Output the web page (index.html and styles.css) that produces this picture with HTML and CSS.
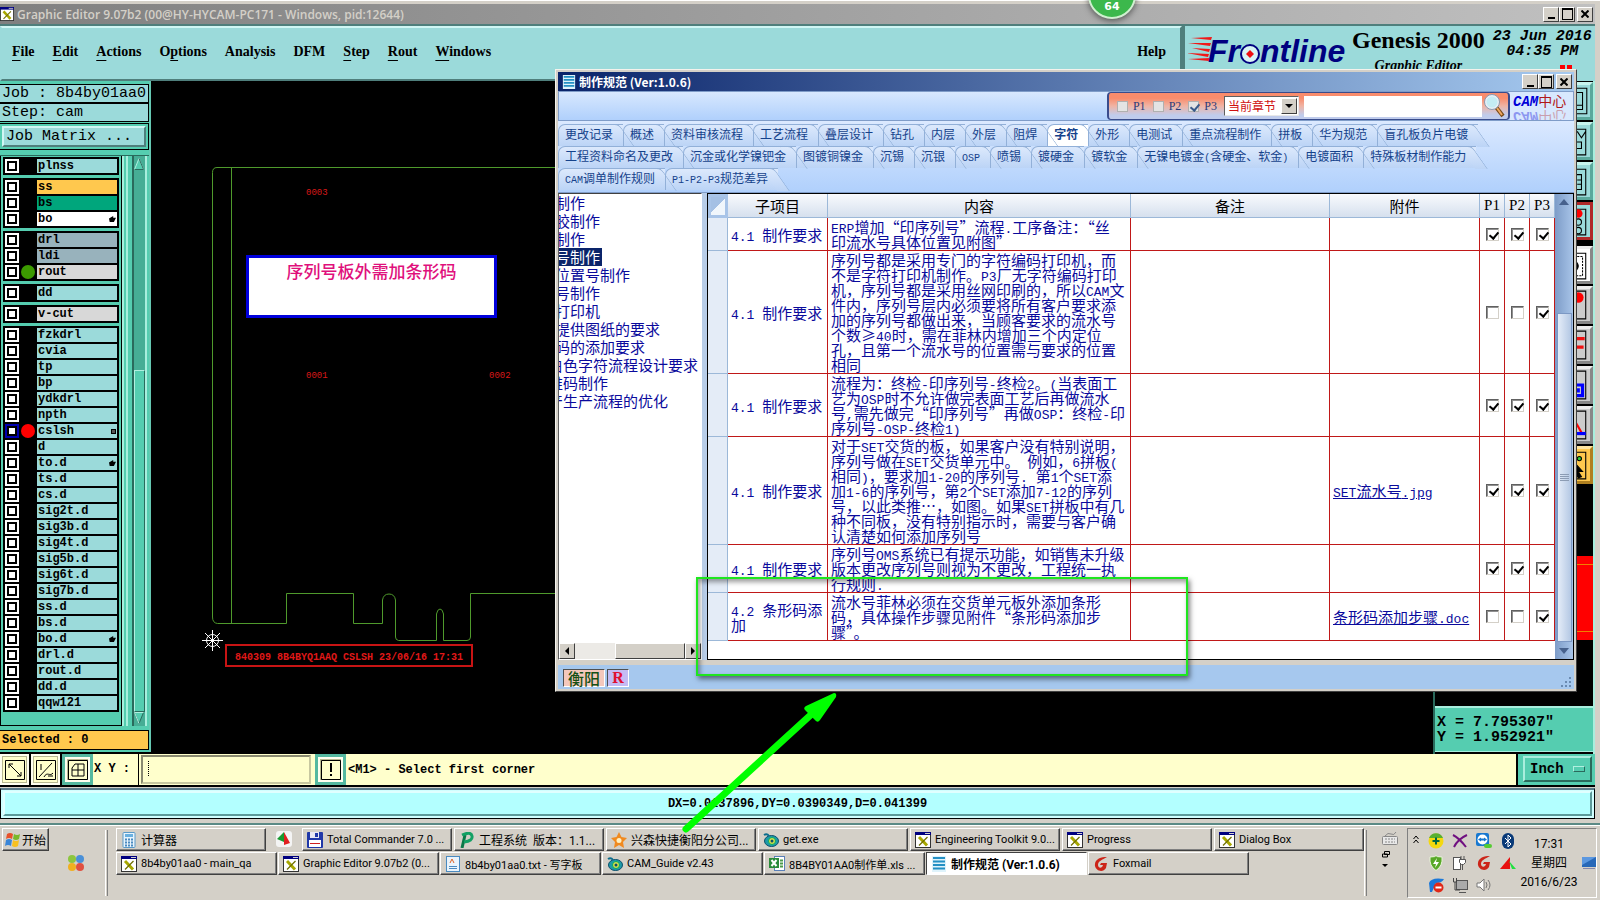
FILE: index.html
```
<!DOCTYPE html>
<html lang="zh-CN">
<head>
    <meta charset="UTF-8">
    <meta name="viewport" content="width=device-width, initial-scale=1.0">
    <title>Graphic Editor 9.07b2</title>
    <link rel="stylesheet" href="styles.css">
</head>
<body>
    <!-- shared icons -->
    <svg class="sprite" aria-hidden="true">
        <symbol id="i-xwin" viewBox="0 0 16 16">
            <rect x="0.5" y="0.5" width="15" height="15" fill="#fff" stroke="#333"/>
            <rect x="0" y="0" width="16" height="3" fill="#000080"/>
            <rect x="10" y="1" width="5" height="1" fill="#ccc"/>
            <path d="M4 5L12 13.5" stroke="#a8a800" stroke-width="3"/>
            <path d="M12.500 5L4 13.500" stroke="#707000" stroke-width="1.200"/>
        </symbol>
        <symbol id="i-doc" viewBox="0 0 16 16">
            <rect x="1" y="0" width="14" height="16" fill="#dff3fb"/>
            <path d="M2 2h12M2 5.500h12M2 9h12M2 12.500h12" stroke="#2590c4" stroke-width="2"/>
        </symbol>
        <symbol id="i-gecko" viewBox="0 0 16 16">
            <ellipse cx="8.500" cy="9" rx="7" ry="5.500" fill="#1e9aa8" stroke="#0b4f6c"/>
            <path d="M1 3q3-2 5 1" fill="none" stroke="#0b6c8c" stroke-width="2"/>
            <circle cx="9" cy="9" r="3.500" fill="#d8e04a" stroke="#0a6"/>
            <circle cx="9" cy="9" r="1.500" fill="#0b4f6c"/>
        </symbol>
        <symbol id="i-fox" viewBox="0 0 16 16">
            <path d="M14 1C8 1 1 3 2 10c1 5 8 7 11 2l1-5H8l-1 2h3c-1 4-5 3-5 0 0-4 4-5 9-8z" fill="#cc2418"/>
        </symbol>
    </svg>

    <div class="editor">
        <div class="titlebar">
            <svg class="ico"><use href="#i-xwin"/></svg>
            <span class="title">Graphic Editor 9.07b2 (00@HY-HYCAM-PC171 - Windows, pid:12644)</span>
            <div class="winbtns">
                <button class="wb min" aria-label="Minimize"></button>
                <button class="wb max" aria-label="Maximize"></button>
                <button class="wb close" aria-label="Close"><svg viewBox="0 0 8 8"><path d="M0.500 0.500L7.500 7.500M7.500 0.500L0.500 7.500"/></svg></button>
            </div>
        </div>

        <div class="top">
            <nav class="menubar">
                <a href="#"><u>F</u>ile</a>
                <a href="#"><u>E</u>dit</a>
                <a href="#"><u>A</u>ctions</a>
                <a href="#">O<u>p</u>tions</a>
                <a href="#">Analysis</a>
                <a href="#">DFM</a>
                <a href="#"><u>S</u>tep</a>
                <a href="#"><u>R</u>out</a>
                <a href="#"><u>W</u>indows</a>
                <a href="#" class="help">Help</a>
            </nav>
            <div class="brand">
                <svg class="logo" width="160" height="34" viewBox="2 0 160 34">
                    <g fill="#f01818">
                        <path d="M5 5L26 4l-1 3zM2 10l23 0-1 3zM6 15l18 1-1 3zM1 20l22 1-1 3zM2 26l22-1-1 3z"/>
                    </g>
                    <text x="22" y="29" class="logo-text">Fr</text>
                    <circle cx="64" cy="21" r="9" fill="#d8f4f4" stroke="#000080" stroke-width="2"/>
                    <path d="M64 17l4 4-4 4-4-4z" fill="#f01010"/>
                    <text x="74" y="29" class="logo-text">ntline</text>
                </svg>
                <div class="product">
                    <div class="name">Genesis 2000</div>
                    <div class="sub">Graphic Editor</div>
                </div>
                <div class="date">23 Jun 2016<br>04:35 PM<div class="led"><i></i><i></i></div></div>
            </div>
        </div>

        <div class="main">
            <aside class="layers">
                <div class="info">Job : 8b4by01aa0</div>
                <div class="info">Step: cam</div>
                <div class="matrix"><button>Job Matrix ...</button></div>
                <div class="listwrap">
                    <div class="list">
                        <div class="group">
                            <label><input type="checkbox"><i></i><span>plnss</span></label>
                        </div>
                        <div class="group">
                            <label><input type="checkbox"><i></i><span class="orange">ss</span></label>
                            <label><input type="checkbox"><i></i><span class="green">bs</span></label>
                            <label><input type="checkbox"><i></i><span class="white">bo<b class="hand"></b></span></label>
                        </div>
                        <div class="group">
                            <label><input type="checkbox"><i></i><span class="steel">drl</span></label>
                            <label><input type="checkbox"><i></i><span class="steel">ldi</span></label>
                            <label><input type="checkbox"><i class="dot-green"></i><span class="grey">rout</span></label>
                        </div>
                        <div class="group">
                            <label><input type="checkbox"><i></i><span>dd</span></label>
                        </div>
                        <div class="group">
                            <label><input type="checkbox"><i></i><span class="grey">v-cut</span></label>
                        </div>
                        <div class="group">
                            <label><input type="checkbox"><i></i><span>fzkdrl</span></label>
                            <label><input type="checkbox"><i></i><span>cvia</span></label>
                            <label><input type="checkbox"><i></i><span>tp</span></label>
                            <label><input type="checkbox"><i></i><span>bp</span></label>
                            <label><input type="checkbox"><i></i><span>ydkdrl</span></label>
                            <label><input type="checkbox"><i></i><span>npth</span></label>
                            <label><input type="checkbox" checked><i class="dot-red"></i><span>cslsh<b class="cells"></b></span></label>
                            <label><input type="checkbox"><i></i><span>d</span></label>
                            <label><input type="checkbox"><i></i><span>to.d<b class="hand"></b></span></label>
                            <label><input type="checkbox"><i></i><span>ts.d</span></label>
                            <label><input type="checkbox"><i></i><span>cs.d</span></label>
                            <label><input type="checkbox"><i></i><span>sig2t.d</span></label>
                            <label><input type="checkbox"><i></i><span>sig3b.d</span></label>
                            <label><input type="checkbox"><i></i><span>sig4t.d</span></label>
                            <label><input type="checkbox"><i></i><span>sig5b.d</span></label>
                            <label><input type="checkbox"><i></i><span>sig6t.d</span></label>
                            <label><input type="checkbox"><i></i><span>sig7b.d</span></label>
                            <label><input type="checkbox"><i></i><span>ss.d</span></label>
                            <label><input type="checkbox"><i></i><span>bs.d</span></label>
                            <label><input type="checkbox"><i></i><span>bo.d<b class="hand"></b></span></label>
                            <label><input type="checkbox"><i></i><span>drl.d</span></label>
                            <label><input type="checkbox"><i></i><span>rout.d</span></label>
                            <label><input type="checkbox"><i></i><span>dd.d</span></label>
                            <label><input type="checkbox"><i></i><span>qqw121</span></label>
                        </div>
                    </div>
                    <div class="rail">
                        <svg viewBox="0 0 10 12"><path d="M5 0.500L9.500 11.500H0.500z" fill="#55cdb0" stroke="#b0f0e0"/><path d="M5 0.500L9.500 11.500H0.500" fill="none" stroke="#2a6a5c"/></svg>
                        <div class="thumb"></div>
                        <svg viewBox="0 0 10 12"><path d="M0.500 0.500H9.500L5 11.500z" fill="#55cdb0" stroke="#2a6a5c"/><path d="M5 11.500L0.500 0.500H9.500" fill="none" stroke="#b0f0e0"/></svg>
                    </div>
                </div>
                <div class="selected">Selected : 0</div>
            </aside>

            <div class="canvas">
                <svg class="board" width="100%" height="100%">
                    <g fill="none" stroke="#4f9a2c">
                        <path d="M420 86.500H66q-4.500 0-4.500 5V536q0 6 5 6.500H135.500V512.500H202.500V542.500H231.500V519q1-6 6.500-6t6.500 6V556q0 3 3 3.500H285.500V533q1-5 3.500-5t3.500 5V559.500H316q3.500 0 3.500-3.500V512.500H420"/>
                        <path d="M80.500 86.500V542"/>
                    </g>
                    <g stroke="#fff" fill="none">
                        <circle cx="61.500" cy="559.500" r="6"/>
                        <path d="M51 559.500h21M61.500 549v21M54 552l15 15M69 552l-15 15"/>
                    </g>
                    <g class="ref">
                        <text x="155" y="114">0003</text>
                        <text x="155" y="297">0001</text>
                        <text x="338" y="297">0002</text>
                    </g>
                    <rect x="75" y="564" width="246" height="21" fill="none" stroke="#c81414" stroke-width="2"/>
                    <text x="198" y="579" text-anchor="middle" class="stamp">840309 8B4BYQ1AAQ CSLSH 23/06/16 17:31</text>
                </svg>
                <div class="note">序列号板外需加条形码</div>
            </div>

            <aside class="side">
                <div class="tools">
                    <button class="tool" aria-label="Display"><svg viewBox="0 0 30 30"><path d="M3 3h24v24H3zM8 7h15v16H8M8 19h15"/></svg></button>
                    <button class="tool" aria-label="Zoom"><svg viewBox="0 0 30 30"><path d="M4 4h22v24H4zM18 6l4 6 4-6M14 16h8v6h-8"/></svg></button>
                    <button class="tool" aria-label="Pan"><svg viewBox="0 0 30 30"><path d="M4 4h22v24H4zM14 9h8v14h-8M18 14h4v4h-4"/></svg></button>
                    <button class="tool red" aria-label="Lights"><svg viewBox="0 0 30 30"><path d="M4 4h22v24H4z"/><circle cx="19" cy="8" r="4" fill="#f00" stroke="none"/><circle cx="19" cy="16" r="3"/><circle cx="19" cy="24" r="3"/></svg></button>
                    <button class="tool white" aria-label="Select"><svg viewBox="0 0 30 30"><path d="M4 4h22v24H4z"/><path d="M12 7h11v18H12" stroke-dasharray="2 1"/><circle cx="14" cy="16" r="5" fill="#000"/></svg></button>
                    <button class="tool silver" aria-label="Pad"><svg viewBox="0 0 30 30"><path d="M4 2h22v26H4z"/><circle cx="19" cy="8" r="5" fill="#f00" stroke="none"/></svg></button>
                    <button class="tool silver" aria-label="Feature"><svg viewBox="0 0 30 30"><path d="M4 2h22v26H4z"/><path d="M16 26V9h9M16 17h8" stroke="#f01010" stroke-width="3"/></svg></button>
                    <button class="tool silver" aria-label="Surface"><svg viewBox="0 0 30 30"><path d="M4 2h22v26H4z"/><path d="M12 15h11v10H12zM19 18v4" stroke="#00f" stroke-width="3"/></svg></button>
                    <button class="tool silver" aria-label="Angle"><svg viewBox="0 0 30 30"><path d="M4 2h22v26H4z"/><path d="M14 8l8 14" stroke="#f00" stroke-width="2"/><path d="M12 23h14" stroke="#00f" stroke-width="3"/></svg></button>
                    <button class="tool gold" aria-label="Pointer"><svg viewBox="0 0 30 30"><path d="M4 3h22v25H4zM12 9h6"/><circle cx="20" cy="9" r="2" fill="#3c3"/><path d="M14 11l9 10-4 0 3 5-3 1-3-5-3 3z" fill="#000"/></svg></button>
                </div>
                <div class="overview"><i></i></div>
                <div class="coords">X = 7.795307"<br>Y = 1.952921"</div>
            </aside>
        </div>

        <div class="command">
            <button class="cbtn" aria-label="Snap"><svg viewBox="0 0 20 20"><path d="M0.500 0.500h19v19h-19zM4 4l12 12M4 8V4h4M16 12v4h-4"/></svg></button>
            <button class="cbtn" aria-label="Ratio"><svg viewBox="0 0 20 20"><path d="M0.500 0.500h19v19h-19zM3 17L16 3M5 4v6M8 17c3-6 6 0 9-4M12 16h5"/></svg></button>
            <button class="cbtn teal" aria-label="Grid"><svg viewBox="0 0 20 20"><path d="M0.500 0.500h19v19h-19zM4 8l3-4h9v12H4zM4 10h12M10 4v12"/></svg></button>
            <label for="xy">X Y :</label>
            <input id="xy" type="text">
            <button class="cbtn teal" aria-label="Message"><svg viewBox="0 0 20 20"><path d="M0.500 0.500h19v19h-19z"/><path d="M10 3v9M10 14v2" stroke-width="2"/></svg></button>
            <span class="message">&lt;M1&gt; - Select first corner</span>
            <div class="unitbox"><button class="unit">Inch<i></i></button></div>
        </div>
        <div class="status"><div>DX=0.0137896,DY=0.0390349,D=0.041399</div></div>
    </div>

    <div class="taskbar">
        <button class="start"><svg class="ico" viewBox="0 0 16 16"><path d="M2 2q3-2 6 0l-1 5q-3-2-6 0z" fill="#e8512a"/><path d="M9 2q3 2 6 0l-1 5q-3 2-6 0z" fill="#7ab82a"/><path d="M1 8q3-2 6 0l-1 6q-3-2-6 0z" fill="#3a86d8"/><path d="M8 8q3 2 6 0l-1 6q-3 2-6 0z" fill="#f8c020"/></svg>开始</button>
        <svg class="quick" width="18" height="18" viewBox="0 0 18 18"><circle cx="5" cy="5" r="4" fill="#8cc63f"/><circle cx="13" cy="5" r="4" fill="#4a90d8"/><circle cx="5" cy="13" r="4" fill="#f0b020"/><circle cx="13" cy="13" r="4" fill="#e05040"/></svg>
        <div class="sep"></div>
        <div class="tasks">
            <div class="row">
                <button class="task zh"><svg class="ico" viewBox="0 0 16 16"><rect x="2" y="0.500" width="12" height="15" rx="1" fill="#e8f4fc" stroke="#5a9ac8"/><rect x="4" y="2" width="8" height="3" fill="#6ab0e0"/><path d="M4 7.500h8M4 10.500h8M4 13.500h8" stroke="#4a8ac0" stroke-width="2" stroke-dasharray="2 1"/></svg>计算器</button>
                <svg class="tiny" width="16" height="16" viewBox="0 0 16 16"><rect width="16" height="16" rx="3" fill="#f4f4f4"/><path d="M8 1L1 8l7 3z" fill="#189a30"/><path d="M8 1l6 11-6 2z" fill="#e02020"/></svg>
                <button class="task"><svg class="ico" viewBox="0 0 16 16"><rect width="16" height="16" rx="1" fill="#2038a8"/><rect x="3" y="0" width="9" height="6" fill="#e8e8f4"/><rect x="8" y="1" width="3" height="4" fill="#2038a8"/><rect x="2" y="8" width="12" height="7" fill="#fff"/><path d="M3 11.500h10" stroke="#d02020"/></svg>Total Commander 7.0 ...</button>
                <button class="task zh"><svg class="ico" viewBox="0 0 16 16"><path d="M3 16L6 3" stroke="#0a7848" stroke-width="3"/><path d="M3 3q9-4 10 1t-8 6" fill="none" stroke="#12a064" stroke-width="3"/></svg>工程系统&nbsp; 版本：1.1...</button>
                <button class="task zh"><svg class="ico" viewBox="0 0 16 16"><path d="M8 0l2.500 5 5.500 1-4 4 1 6-5-3-5 3 1-6-4-4 5.500-1z" fill="#f08a20"/><circle cx="8" cy="8.500" r="2.500" fill="#fff0c0"/></svg>兴森快捷衡阳分公司...</button>
                <button class="task"><svg class="ico"><use href="#i-gecko"/></svg>get.exe</button>
                <button class="task"><svg class="ico"><use href="#i-xwin"/></svg>Engineering Toolkit 9.0...</button>
                <button class="task"><svg class="ico"><use href="#i-xwin"/></svg>Progress</button>
                <button class="task"><svg class="ico"><use href="#i-xwin"/></svg>Dialog Box</button>
            </div>
            <div class="row wide">
                <button class="task"><svg class="ico"><use href="#i-xwin"/></svg>8b4by01aa0 - main_qa</button>
                <button class="task"><svg class="ico"><use href="#i-xwin"/></svg>Graphic Editor 9.07b2 (0...</button>
                <button class="task"><svg class="ico" viewBox="0 0 16 16"><rect x="1.500" y="0.500" width="13" height="15" fill="#eaf4fc" stroke="#4a8ac0"/><path d="M5 7l2-4 2 4" fill="none" stroke="#e06020"/><path d="M4 10.500h8M4 12.500h8" stroke="#4a8ac0"/></svg>8b4by01aa0.txt - 写字板</button>
                <button class="task"><svg class="ico"><use href="#i-gecko"/></svg>CAM_Guide v2.43</button>
                <button class="task"><svg class="ico" viewBox="0 0 16 16"><rect x="5.500" y="0.500" width="10" height="14" fill="#fff" stroke="#5a80b8"/><path d="M11 4.500h3M11 7.500h3M11 10.500h3" stroke="#4a9a4a" stroke-width="2"/><rect x="0" y="2" width="10" height="10" fill="#2a8a3a"/><path d="M2.500 4l5 6M7.500 4l-5 6" stroke="#fff" stroke-width="2"/></svg>8B4BY01AA0制作单.xls ...</button>
                <button class="task active"><svg class="ico"><use href="#i-doc"/></svg>制作规范 (Ver:1.0.6)</button>
                <button class="task"><svg class="ico"><use href="#i-fox"/></svg>Foxmail</button>
            </div>
        </div>
        <div class="sep"></div>
        <div class="lang">
            <svg width="16" height="14" viewBox="0 0 16 14"><rect x="0.500" y="5.500" width="15" height="8" rx="1" fill="#e8e8e8" stroke="#888"/><path d="M3 8h10M3 11h10" stroke="#888" stroke-dasharray="2 1"/><path d="M3 5q3-4 6-2t5-2" fill="none" stroke="#888"/></svg>
            <svg width="8" height="7" viewBox="0 0 8 7"><path d="M2.500 0.500h5v3h-5zM0.500 3h5v3h-5z" fill="#d4d0c8" stroke="#000"/></svg>
            <svg width="6" height="3" viewBox="0 0 6 3"><path d="M0 0h6L3 3z"/></svg>
        </div>
        <div class="tray">
            <svg class="chev" width="6" height="9" viewBox="0 0 6 9"><path d="M0.500 4L3 1l2.500 3M0.500 8L3 5l2.500 3" fill="none" stroke="#000"/></svg>
            <div class="trayicons">
                <svg viewBox="0 0 16 16"><circle cx="8" cy="8" r="7.500" fill="#f4d810"/><path d="M1 5a7.500 7.500 0 0 1 14 0" fill="#58b030"/><path d="M8 4.500v7M4.500 8h7" stroke="#064" stroke-width="2"/></svg>
                <svg viewBox="0 0 16 16"><path d="M1 2q6 3 13 12M15 2Q6 6 2 14" fill="none" stroke="#701080" stroke-width="2"/></svg>
                <svg viewBox="0 0 16 16"><rect x="0" y="0" width="13" height="13" rx="2" fill="#1878d0"/><circle cx="6.500" cy="6.500" r="5" fill="#fff"/><path d="M2 6.500l3-2v1h3v-1l3 2-3 2v-1H5v1z" fill="#1878d0"/><rect x="8" y="11" width="8" height="4" rx="2" fill="#5c3"/></svg>
                <svg viewBox="0 0 16 16"><rect x="2" y="0" width="12" height="16" rx="6" fill="#0a3a78"/><path d="M5 5l6 6-3 3V2l3 3-6 6" fill="none" stroke="#fff"/></svg>
                <svg viewBox="0 0 16 16"><path d="M2 2q6 0 6-1.500 0 1.500 6 1.500 1 9-6 13.500Q1 11 2 2z" fill="#58a828" stroke="#e8f4d8"/><path d="M9 3L5 9h3l-1 4 4-6H8z" fill="#fff"/></svg>
                <svg viewBox="0 0 16 16"><rect x="1.500" y="2.500" width="7" height="12" fill="#fff" stroke="#555"/><path d="M9 1v3M12 1v3M7.500 4.500h6v3l-2 2h-2l-2-2zM10.500 10v5" fill="#fff" stroke="#555"/></svg>
                <svg><use href="#i-fox"/></svg>
                <svg viewBox="0 0 16 16"><path d="M0 14L10 2v12z" fill="#e81010"/><path d="M9 6l7 8h-4z" fill="#20e040"/></svg>
                <svg viewBox="0 0 16 16"><path d="M1 6q2-6 15-4-2 4-8 4l-4 9H2z" fill="#1c78d8"/><circle cx="10.500" cy="10.500" r="5" fill="#e02818"/><path d="M7.500 10.500h6" stroke="#fff" stroke-width="2"/></svg>
                <svg viewBox="0 0 16 16"><rect x="4.500" y="3.500" width="11" height="9" fill="#aaa" stroke="#555"/><path d="M7 15.500h7" stroke="#555"/><path d="M1.500 1v4h3V1M3 5v8h5" fill="none" stroke="#444"/></svg>
                <svg viewBox="0 0 16 16"><path d="M1 6h3l4-4v12l-4-4H1z" fill="#fff" stroke="#777"/><path d="M10 5q2 3 0 6M12 3q4 5 0 10" fill="none" stroke="#777"/></svg>
            </div>
            <div class="clock">17:31<br>星期四<br>2016/6/23</div>
            <svg class="desk" width="14" height="12" viewBox="0 0 14 12"><rect width="14" height="10" fill="#2868b8"/><path d="M0 0h14L0 8z" fill="#5c98e0"/><path d="M1 11.500h12" stroke="#88a"/></svg>
        </div>
    </div>

    <div class="dialog">
        <div class="dlg-title">
            <svg class="ico"><use href="#i-doc"/></svg>
            <span>制作规范 (Ver:1.0.6)</span>
            <div class="winbtns">
                <button class="wb min" aria-label="最小化"></button>
                <button class="wb max" aria-label="最大化"></button>
                <button class="wb close" aria-label="关闭"><svg viewBox="0 0 8 8"><path d="M0.500 0.500L7.500 7.500M7.500 0.500L0.500 7.500"/></svg></button>
            </div>
        </div>
        <div class="dlg-tools">
            <div class="search">
                <label><input type="checkbox" class="soft">P1</label>
                <label><input type="checkbox" class="soft">P2</label>
                <label><input type="checkbox" class="soft" checked>P3</label>
                <div class="combo">
                    <select aria-label="范围"><option>当前章节</option></select>
                    <i></i>
                </div>
                <input type="text" class="query" aria-label="搜索">
                <svg width="22" height="24" viewBox="0 0 22 24"><path d="M12 13l7 9" stroke="#7a4a18" stroke-width="4"/><path d="M13 14l5 7" stroke="#f0a860" stroke-width="2"/><circle cx="8" cy="8" r="6.500" fill="#c4ecf4" stroke="#e8eef4" stroke-width="2"/><circle cx="8" cy="8" r="7.500" fill="none" stroke="#8a9ab0"/></svg>
            </div>
            <div class="cam"><div><em>CAM</em>中心</div><div class="mirror" aria-hidden="true"><em>CAM</em>中心</div></div>
        </div>
        <div class="tabs">
            <div class="tabrow">
                <button>更改记录</button><button>概述</button><button>资料审核流程</button><button>工艺流程</button><button>叠层设计</button><button>钻孔</button><button>内层</button><button>外层</button><button>阻焊</button><button class="on">字符</button><button>外形</button><button>电测试</button><button>重点流程制作</button><button>拼板</button><button>华为规范</button><button>盲孔板负片电镀</button>
            </div>
            <div class="tabrow">
                <button>工程资料命名及更改</button><button>沉金或化学镍钯金</button><button>图镀铜镍金</button><button>沉锡</button><button>沉银</button><button><span>OSP</span></button><button>喷锡</button><button>镀硬金</button><button>镀软金</button><button>无镍电镀金<span>(</span>含硬金、软金<span>)</span></button><button>电镀面积</button><button>特殊板材制作能力</button>
            </div>
            <div class="tabrow">
                <button><span>CAM</span>调单制作规则</button><button><span>P1-P2-P3</span>规范差异</button>
            </div>
        </div>
        <div class="content">
            <div class="tree">
                <ul>
                    <li>制作</li>
                    <li>胶制作</li>
                    <li>制作</li>
                    <li><span class="sel">号制作</span></li>
                    <li>位置号制作</li>
                    <li>号制作</li>
                    <li>打印机</li>
                    <li>提供图纸的要求</li>
                    <li>码的添加要求</li>
                    <li class="half">白色字符流程设计要求</li>
                    <li class="half">维码制作</li>
                    <li class="half">产生产流程的优化</li>
                </ul>
                <div class="hscroll">
                    <button aria-label="左"><svg width="4" height="8" viewBox="0 0 4 8"><path d="M4 0v8L0 4z"/></svg></button>
                    <div class="track"><i></i></div>
                    <button aria-label="右"><svg width="4" height="8" viewBox="0 0 4 8"><path d="M0 0v8l4-4z"/></svg></button>
                </div>
            </div>
            <div class="sheet">
                <div class="tablebox">
                    <table>
                        <colgroup><col class="c-head"><col class="c-item"><col class="c-text"><col><col class="c-file"><col class="c-p"><col class="c-p"><col class="c-p"></colgroup>
                        <thead>
                            <tr><th class="corner"></th><th>子项目</th><th>内容</th><th>备注</th><th>附件</th><th class="lat">P1</th><th class="lat">P2</th><th class="lat">P3</th></tr>
                        </thead>
                        <tbody>
                            <tr>
                                <th></th><td><span>4.1 </span>制作要求</td>
                                <td><span>ERP</span>增加“印序列号”流程<span>.</span>工序备注：“丝<br>印流水号具体位置见附图”</td>
                                <td></td><td></td>
                                <td class="chk"><input type="checkbox" aria-label="P1" checked></td><td class="chk"><input type="checkbox" aria-label="P2" checked></td><td class="chk"><input type="checkbox" aria-label="P3" checked></td>
                            </tr>
                            <tr>
                                <th></th><td><span>4.1 </span>制作要求</td>
                                <td>序列号都是采用专门的字符编码打印机，而<br>不是字符打印机制作。<span>P3</span>厂无字符编码打印<br>机，序列号都是采用丝网印刷的，所以<span>CAM</span>文<br>件内，序列号层内必须要将所有客户要求添<br>加的序列号都做出来，当顾客要求的流水号<br>个数≥<span>40</span>时，需在菲林内增加三个内定位<br>孔，且第一个流水号的位置需与要求的位置<br>相同</td>
                                <td></td><td></td>
                                <td class="chk"><input type="checkbox" aria-label="P1"></td><td class="chk"><input type="checkbox" aria-label="P2"></td><td class="chk"><input type="checkbox" aria-label="P3" checked></td>
                            </tr>
                            <tr>
                                <th></th><td><span>4.1 </span>制作要求</td>
                                <td>流程为：终检<span>-</span>印序列号<span>-</span>终检<span>2</span>。<span>(</span>当表面工<br>艺为<span>OSP</span>时不允许做完表面工艺后再做流水<br>号<span>,</span>需先做完“印序列号”再做<span>OSP</span>：终检<span>-</span>印<br>序列号<span>-OSP-</span>终检<span>1)</span></td>
                                <td></td><td></td>
                                <td class="chk"><input type="checkbox" aria-label="P1" checked></td><td class="chk"><input type="checkbox" aria-label="P2" checked></td><td class="chk"><input type="checkbox" aria-label="P3" checked></td>
                            </tr>
                            <tr>
                                <th></th><td><span>4.1 </span>制作要求</td>
                                <td>对于<span>SET</span>交货的板，如果客户没有特别说明，<br>序列号做在<span>SET</span>交货单元中。<span> </span>例如，<span>6</span>拼板<span>(</span><br>相同<span>)</span>，要求加<span>1-20</span>的序列号<span>. </span>第<span>1</span>个<span>SET</span>添<br>加<span>1-6</span>的序列号，第<span>2</span>个<span>SET</span>添加<span>7-12</span>的序列<br>号，以此类推…，如图。如果<span>SET</span>拼板中有几<br>种不同板，没有特别指示时，需要与客户确<br>认清楚如何添加序列号</td>
                                <td></td><td><a href="#"><span>SET</span>流水号<span>.jpg</span></a></td>
                                <td class="chk"><input type="checkbox" aria-label="P1" checked></td><td class="chk"><input type="checkbox" aria-label="P2" checked></td><td class="chk"><input type="checkbox" aria-label="P3" checked></td>
                            </tr>
                            <tr>
                                <th></th><td><span>4.1 </span>制作要求</td>
                                <td>序列号<span>OMS</span>系统已有提示功能，如销售未升级<br>版本更改序列号则视为不更改，工程统一执<br>行规则<span>.</span></td>
                                <td></td><td></td>
                                <td class="chk"><input type="checkbox" aria-label="P1" checked></td><td class="chk"><input type="checkbox" aria-label="P2" checked></td><td class="chk"><input type="checkbox" aria-label="P3" checked></td>
                            </tr>
                            <tr>
                                <th></th><td><span>4.2 </span>条形码添<br>加</td>
                                <td>流水号菲林必须在交货单元板外添加条形<br>码，具体操作步骤见附件“条形码添加步<br>骤”。</td>
                                <td></td><td><a href="#">条形码添加步骤<span>.doc</span></a></td>
                                <td class="chk"><input type="checkbox" aria-label="P1"></td><td class="chk"><input type="checkbox" aria-label="P2"></td><td class="chk"><input type="checkbox" aria-label="P3" checked></td>
                            </tr>
                        </tbody>
                    </table>
                </div>
                <div class="vscroll">
                    <svg width="10" height="6" viewBox="0 0 10 6"><path d="M5 0l5 6H0z" fill="#47618c"/></svg>
                    <div class="vthumb"><i></i></div>
                    <svg width="10" height="6" viewBox="0 0 10 6"><path d="M0 0h10L5 6z" fill="#47618c"/></svg>
                </div>
            </div>
        </div>
        <div class="dlg-status">
            <span class="site">衡阳</span><span class="mode">R</span>
            <svg width="12" height="12" viewBox="0 0 12 12"><path d="M9 1h2v2H9zM5 5h2v2H5zM9 5h2v2H9zM1 9h2v2H1zM5 9h2v2H5zM9 9h2v2H9z" fill="#6a8ab0"/></svg>
        </div>
    </div>

    <div class="badge">64</div>
    <div class="frame"></div>
    <svg class="arrow" width="160" height="145" viewBox="0 0 160 145"><path d="M9 137L138 19" stroke="#00ff00" stroke-width="7" stroke-linecap="round"/><path d="M157 1L129 14q-3 2-1 4l11 11q2 2 4-1L159 5q1-4-2-4z" fill="#00ff00"/></svg>
</body>
</html>
```
FILE: styles.css
```
* {
    box-sizing: border-box;
}
body {
    margin: 0;
    min-height: 100vh;
    display: flex;
    flex-direction: column;
    position: relative;
    overflow: hidden;
    background: #d4d0c8;
    font-family: "Noto Sans CJK SC", sans-serif;
    font-size: 12px;
    color: #000;
}
button, input, select {
    font: inherit;
    color: inherit;
    margin: 0;
    padding: 0;
}
button {
    border: 0;
    background: none;
}
svg {
    flex: none;
}
.sprite {
    position: absolute;
    width: 0;
    height: 0;
}
.ico {
    width: 16px;
    height: 16px;
}

/* editor window */
.editor {
    flex: 1;
    display: flex;
    flex-direction: column;
    padding: 3px 5px 4px 0;
    border-top: 1px solid #fff;
    border-bottom: 2px solid #5b8a85;
    background: #d4d0c8;
}
.titlebar {
    height: 20px;
    display: flex;
    align-items: center;
    gap: 3px;
    padding-right: 2px;
    background: linear-gradient(90deg, #808080, #c0c0c0);
}
.titlebar .ico {
    width: 14px;
    height: 14px;
}
.title {
    flex: 1;
    font: 600 12px "Open Sans", sans-serif;
    color: #d4d0c8;
}
.winbtns {
    display: flex;
}
.wb {
    width: 16px;
    height: 15px;
    display: flex;
    align-items: center;
    justify-content: center;
    background: #d4d0c8;
    border: 1px solid;
    border-color: #fff #404040 #404040 #fff;
}
.wb.min::before {
    content: "";
    width: 7px;
    height: 2px;
    margin-top: 8px;
    background: #000;
}
.wb.max::before {
    content: "";
    width: 9px;
    height: 9px;
    border: 1px solid #000;
    border-top-width: 2px;
}
.wb.close {
    margin-left: 2px;
}
.wb svg {
    width: 8px;
    height: 8px;
    stroke: #000;
    stroke-width: 2;
}
.top {
    height: 57px;
    display: flex;
    background: #9bdada;
    border-top: 2px solid #4f7f7c;
}
.menubar {
    flex: 1;
    display: flex;
    align-items: center;
    gap: 18px;
    padding: 0 14px 4px 10px;
    border: 2px solid;
    border-color: #d0f6f4 #4f7f7c #4f7f7c #9bdada;
}
.menubar a {
    font: bold 14px "Liberation Serif", serif;
    color: #000;
    text-decoration: none;
}
.menubar u {
    text-underline-offset: 4px;
}
.menubar .help {
    margin-left: auto;
}
.brand {
    width: 413px;
    display: flex;
    gap: 4px;
    padding-left: 3px;
    border-left: 3px solid #4f7f7c;
}
.logo {
    margin-top: 7px;
}
.logo-text {
    font: italic bold 32px "Liberation Sans", sans-serif;
    fill: #000080;
}
.product {
    text-align: center;
    font-family: "Liberation Serif", serif;
    font-weight: bold;
}
.product .name {
    font-size: 24px;
    line-height: 28px;
    white-space: nowrap;
}
.product .sub {
    font-size: 14px;
    line-height: 24px;
    font-style: italic;
}
.date {
    font: italic bold 15px/15px "Liberation Mono", monospace;
    padding: 3px 0 0 4px;
    text-align: center;
    white-space: nowrap;
}
.led {
    display: flex;
    justify-content: flex-end;
    gap: 2px;
    padding: 6px 20px 0 0;
}
.led i {
    width: 5px;
    height: 5px;
    background: #f00;
}

.main {
    flex: 1;
    display: flex;
    background: #000;
}
/* layer list */
.layers {
    width: 151px;
    display: flex;
    flex-direction: column;
    padding: 3px 0 2px 0;
    margin-bottom: 2px;
    background: #55cdb0;
    border-right: 2px solid #66c8b2;
}
.info {
    height: 19px;
    padding-left: 2px;
    border: 1px solid #000;
    border-left: 0;
    background: #9bdada;
    font: 15px/17px "Liberation Mono", monospace;
    white-space: nowrap;
}
.matrix {
    margin-top: 1px;
    padding: 2px;
    border: 1px solid #000;
    border-left: 0;
}
.matrix button {
    width: 100%;
    height: 21px;
    padding-left: 2px;
    text-align: left;
    background: #9bdada;
    border: 2px solid;
    border-color: #d0f6f4 #4f7f7c #4f7f7c #d0f6f4;
    font: 15px/17px "Liberation Mono", monospace;
    white-space: nowrap;
}
.listwrap {
    flex: 1;
    display: flex;
    margin: 5px 0 4px;
    border-top: 1px solid #2a6a5c;
}
.list {
    width: 122px;
    display: flex;
    flex-direction: column;
    gap: 3px;
    padding: 1px 2px 10px 2px;
    border: 1px solid #000;
    border-top: 0;
}
.group {
    padding: 1px 2px;
    background: #000;
}
.group label {
    display: flex;
    height: 16px;
    align-items: center;
}
.group input {
    appearance: none;
    width: 14px;
    height: 14px;
    border: 2px solid #fff;
    background: #fff;
    box-shadow: inset 0 0 0 2px #000;
}
.group input:checked {
    border-color: #0000b0;
}
.group i {
    width: 14px;
    height: 14px;
    margin: 0 2px;
    border-radius: 50%;
}
.dot-green {
    background: #3c9a00;
}
.dot-red {
    background: #f00;
}
.group span {
    flex: 1;
    height: 14px;
    display: flex;
    align-items: center;
    justify-content: space-between;
    padding: 0 1px;
    background: #9bdada;
    font: bold 12px/14px "Liberation Mono", monospace;
}
.group .orange {
    background: #ffc84e;
}
.group .green {
    background: #00a67c;
}
.group .white {
    background: #fff;
}
.group .steel {
    background: #98b2bc;
}
.group .grey {
    background: #d8d8d8;
}
.hand {
    width: 7px;
    height: 6px;
    background: #000;
    clip-path: polygon(0 40%, 60% 0, 60% 30%, 100% 30%, 70% 100%, 10% 100%);
}
.cells {
    width: 5px;
    height: 5px;
    border: 1px solid #000;
    background: #555;
}
.rail {
    width: 27px;
    display: flex;
    flex-direction: column;
    align-items: flex-end;
    padding: 2px;
    background: linear-gradient(90deg, #a8eedd 0 2px, #55cdb0 2px 4px, #a8eedd 4px 6px, #55cdb0 6px 10px, #2a6a5c 10px 12px, #46ad95 12px 23px, #a8eedd 23px 25px, #55cdb0 25px);
}
.rail svg {
    width: 10px;
    height: 12px;
    margin-right: 3px;
}
.thumb {
    width: 11px;
    flex: 1;
    margin: 200px 2px 0 0;
    background: #55cdb0;
    border: 1px solid;
    border-color: #b0f0e0 #2a6a5c #2a6a5c #b0f0e0;
}
.selected {
    height: 20px;
    padding-left: 2px;
    border: 1px solid #000;
    border-left: 0;
    background: #ffc84e;
    font: bold 12px/18px "Liberation Mono", monospace;
}

/* drawing area */
.canvas {
    flex: 1;
    position: relative;
    overflow: hidden;
}
.board {
    position: absolute;
    inset: 0;
}
.ref {
    font: 9px "Liberation Mono", monospace;
    fill: #d81818;
}
.stamp {
    font: bold 10px "Liberation Mono", monospace;
    fill: #e01818;
}
.note {
    position: absolute;
    left: 95px;
    top: 174px;
    width: 251px;
    height: 63px;
    padding-top: 3px;
    border: 3px solid #0000dc;
    background: #fff;
    color: #e0107c;
    font-size: 17px;
    font-weight: 500;
    line-height: 20px;
    text-align: center;
}
.side {
    width: 162px;
    display: flex;
    flex-direction: column;
    border-right: 2px solid #a8eedd;
    border-left: 2px solid #2a6a5c;
}
.tools {
    align-self: flex-end;
    display: flex;
    flex-direction: column;
    gap: 2px;
    padding-top: 1px;
    background: #000;
}
.tool {
    width: 38px;
    height: 38px;
    background: #9bdada;
    border: 3px solid;
    border-color: #c8f4ee #5ba89c #5ba89c #c8f4ee;
}
.tool.red {
    border-color: #b02828;
}
.tool.white {
    margin-top: 4px;
    background: #fff;
    border-color: #eee #888 #888 #eee;
}
.tool.silver {
    background: #ccc;
    border-color: #eee #888 #888 #eee;
}
.tool.gold {
    background: #ffc84e;
    border-color: #ffe4a0 #b08020 #b08020 #ffe4a0;
}
.tool svg {
    display: block;
    width: 32px;
    height: 32px;
    fill: none;
    stroke: #000;
}
.overview {
    flex: 1;
    display: flex;
    align-items: flex-start;
    padding-top: 72px;
}
.overview i {
    flex: 1;
    height: 84px;
    background: #f00;
    border-top: 8px solid #f00;
    border-bottom: 8px solid #f00;
    box-shadow: inset 0 1px #f08000, inset 0 -1px #f08000;
}
.coords {
    height: 46px;
    margin-bottom: 2px;
    padding: 7px 2px;
    border-top: 2px solid #a8eedd;
    border-bottom: 1px solid #a8eedd;
    background: #55cdb0;
    font: bold 15px/15px "Liberation Mono", monospace;
}

/* command line */
.command {
    height: 33px;
    display: flex;
    align-items: center;
    border-bottom: 2px solid #000;
    background: #ffffcc;
    font: bold 12px "Liberation Mono", monospace;
}
.cbtn {
    width: 31px;
    height: 31px;
    display: flex;
    align-items: center;
    justify-content: center;
    background: #ffffcc;
    border-right: 2px solid #000;
    box-shadow: inset 0 0 0 2px #fffff0, inset 0 0 0 3px #b8b890;
}
.cbtn.teal {
    border: 3px solid #55b8a0;
}
.cbtn svg {
    width: 20px;
    height: 20px;
    fill: none;
    stroke: #000;
}
.command label {
    width: 46px;
    padding-left: 1px;
    border-right: 1px solid #000;
    line-height: 31px;
}
.command input {
    width: 170px;
    height: 29px;
    margin: 0 4px 0 2px;
    padding: 0 6px;
    /* text cursor */
    background: repeating-linear-gradient(#000 0 1px, transparent 1px 2px) 5px 4px / 1px 15px no-repeat #ffffcc;
    border: 2px solid;
    border-color: #8a8a70 #c8c8a0 #c8c8a0 #8a8a70;
}
.message {
    flex: 1;
    padding-left: 2px;
}
.unitbox {
    width: 79px;
    height: 31px;
    padding: 2px 3px 3px 5px;
    border-left: 2px solid #000;
    background: #55cdb0;
}
.unit {
    width: 100%;
    height: 26px;
    display: flex;
    align-items: center;
    justify-content: space-between;
    padding: 0 5px;
    border: 2px solid;
    border-color: #a8eedd #2a6a5c #2a6a5c #a8eedd;
    font: bold 14px "Liberation Mono", monospace;
}
.unit i {
    width: 12px;
    height: 6px;
    border: 1px solid;
    border-color: #b0f0e0 #2a6a5c #2a6a5c #b0f0e0;
}
.status {
    height: 31px;
    margin-top: 1px;
    padding: 1px 2px;
    border: 1px solid #000;
    border-top: 2px solid #5a7a88;
    background: #d0ffff;
}
.status div {
    height: 25px;
    background: #b3ffff;
    border: 2px solid;
    border-color: #e0ffff #5c9a9a #5c9a9a #e0ffff;
    font: bold 12px/22px "Liberation Mono", monospace;
    text-align: center;
}

/* taskbar */
.taskbar {
    height: 75px;
    display: flex;
    align-items: flex-start;
    padding: 2px 3px 2px 2px;
    border-top: 1px solid #fff;
    font-family: Roboto, "Noto Sans CJK SC", sans-serif;
}
.start, .task {
    height: 23px;
    display: flex;
    align-items: center;
    gap: 4px;
    padding: 0 4px;
    background: #d4d0c8;
    border: 1px solid;
    border-color: #fff #404040 #404040 #fff;
    box-shadow: inset -1px -1px #808080;
    white-space: nowrap;
}
.start {
    width: 47px;
    gap: 1px;
    padding: 0 2px;
}
.quick {
    margin: 26px 20px 0 18px;
}
.sep {
    width: 3px;
    height: 66px;
    margin-top: 2px;
    border-left: 1px solid #fff;
    border-right: 1px solid #808080;
}
.tasks {
    flex: 1;
    display: flex;
    flex-direction: column;
    gap: 1px;
    padding-left: 8px;
}
.row {
    display: flex;
    gap: 2px;
}
.task {
    width: 150px;
    font-size: 11px;
}
.row.wide {
    gap: 1px;
}
.row.wide .task {
    width: 161px;
}
.task.zh {
    font-size: 12px;
}
.task.active {
    background: #fff;
    border-color: #404040 #fff #fff #404040;
    box-shadow: none;
    font-weight: bold;
    font-size: 12px;
}
.tiny {
    margin: 3px 8px;
}
.lang {
    display: flex;
    flex-direction: column;
    gap: 6px;
    padding: 3px 9px 0 15px;
}
.tray {
    width: 192px;
    height: 70px;
    display: flex;
    align-items: center;
    border: 1px solid;
    border-color: #808080 #fff #fff #808080;
}
.chev {
    align-self: flex-start;
    margin: 6px 9px 0 5px;
}
.trayicons {
    display: grid;
    grid-template-columns: repeat(4, 16px);
    gap: 6px 8px;
}
.trayicons svg {
    width: 16px;
    height: 16px;
}
.clock {
    flex: 1;
    font-size: 12px;
    line-height: 19px;
    text-align: center;
}

/* spec window */
.dialog {
    position: absolute;
    left: 555px;
    right: 23px;
    top: 69px;
    padding: 2px;
    border: 1px solid;
    border-color: #f4f2ec #404040 #404040 #f4f2ec;
    background: #d4d0c8;
    color: #0a0a9c;
}
.dlg-title {
    height: 19px;
    display: flex;
    align-items: center;
    gap: 3px;
    padding: 0 2px 0 4px;
    background: linear-gradient(90deg, #0a246a, #a6caf0);
    color: #fff;
    font-size: 12px;
    line-height: 16px;
    font-weight: bold;
}
.dlg-title .ico {
    width: 14px;
    height: 14px;
}
.dlg-title span {
    flex: 1;
}
.dlg-tools {
    height: 30px;
    display: flex;
    justify-content: flex-end;
    background: linear-gradient(#d8e8fe, #b0d0fc);
    border: 1px solid #7f9cc8;
}
.search {
    display: flex;
    align-items: center;
    padding: 0 2px 0 8px;
    border: 1px solid #3a4c8c;
    border-width: 1px 2px;
    border-radius: 4px;
    background: linear-gradient(#f98c6c 20%, #f0b4a4 50%, #c0ccec 85%);
    font: 12px "Liberation Serif", serif;
    color: #2a3a7a;
}
.search label {
    display: flex;
    align-items: center;
    gap: 5px;
    margin-right: 7px;
}
.soft {
    appearance: none;
    width: 11px;
    height: 11px;
    border: 1px solid #b0b0b0;
    background: #e4e4e4;
}
.soft:checked::before, .chk input:checked::before {
    content: "";
    display: block;
    width: 4px;
    height: 7px;
    margin: 0 0 0 3px;
    border: solid #3a5a8a;
    border-width: 0 2px 2px 0;
    transform: rotate(40deg);
}
.combo {
    width: 75px;
    height: 20px;
    display: flex;
    align-items: center;
    margin-right: 5px;
    padding: 1px;
    border: 1px solid;
    border-color: #606060 #e8e8e8 #e8e8e8 #606060;
    background: #fff;
}
.combo select {
    appearance: none;
    flex: 1;
    min-width: 0;
    border: 0;
    padding-left: 2px;
    background: #fff;
    color: #d01010;
    font: 12px/16px "Noto Sans CJK SC", sans-serif;
}
.combo i {
    width: 16px;
    height: 16px;
    display: flex;
    align-items: center;
    justify-content: center;
    background: #d4d0c8;
    border: 1px solid;
    border-color: #fff #404040 #404040 #fff;
}
.combo i::before {
    content: "";
    border: 4px solid transparent;
    border-top-color: #000;
    border-bottom: 0;
}
.query {
    width: 178px;
    height: 21px;
    margin-right: 2px;
    border: 0;
    background: #fff;
}
.cam {
    width: 63px;
    padding-left: 3px;
    overflow: hidden;
    color: #b01818;
    font-size: 14px;
    line-height: 17px;
    white-space: nowrap;
    background: #d8e8fe;
}
.cam em {
    font: italic bold 14px/1 "Liberation Mono", monospace;
    color: #0000d8;
}
.mirror {
    transform: scaleY(-1);
    opacity: 0.35;
}
.tabs {
    padding: 3px 0 2px;
    background: linear-gradient(#dbe9ff, #b0d0fc);
    border-bottom: 1px solid #7f9cc8;
}
.tabrow {
    display: flex;
    height: 22px;
}
.tabrow button {
    position: relative;
    padding: 0 10px 4px 6px;
    border: 1px solid #92b0d8;
    border-width: 1px 0 0 1px;
    border-radius: 7px 0 0 0;
    background: linear-gradient(#dce9fc, #bcd4f6);
    color: #15428b;
    font-size: 12px;
    line-height: 17px;
    white-space: nowrap;
}
/* slanted right edge */
.tabrow button::after {
    content: "";
    position: absolute;
    z-index: 1;
    top: -1px;
    right: -4px;
    width: 12px;
    height: 22px;
    border: 1px solid #92b0d8;
    border-width: 1px 1px 0 0;
    border-radius: 0 5px 0 0;
    transform: skewX(35deg);
}
.tabrow button:last-child::after {
    background: linear-gradient(#dce9fc, #bcd4f6);
    z-index: -1;
}
.tabrow button:last-child {
    z-index: 0;
}
.tabrow .on {
    background: #fff;
    font-weight: bold;
}
.tabrow span {
    font: 10px/1 "Liberation Mono", monospace;
}
.content {
    display: flex;
    gap: 5px;
    background: #b8cde8;
    font-size: 15px;
}
.tree {
    width: 144px;
    display: flex;
    flex-direction: column;
    border: 1px solid;
    border-color: #404040 #fff #fff #606060;
    background: #fff;
    overflow: hidden;
}
.tree ul {
    flex: 1;
    list-style: none;
    margin: 0 0 0 -4px;
    padding: 0;
    line-height: 18px;
    white-space: nowrap;
}
.half {
    text-indent: -7px;
}
.sel {
    display: block;
    width: 47px;
    background: #0a246a;
    color: #fff;
}
.hscroll {
    height: 16px;
    display: flex;
}
.hscroll button, .track i {
    width: 16px;
    background: #d4d0c8;
    border: 1px solid;
    border-color: #fff #404040 #404040 #fff;
}
.hscroll svg {
    display: block;
    margin: 0 auto;
}
.track {
    flex: 1;
    display: flex;
    justify-content: flex-end;
    background: #eceae6;
}
.track i {
    width: 70px;
}
.sheet {
    flex: 1;
    display: flex;
    border: 1px solid #000;
    background: #fff;
}
.tablebox {
    flex: 1;
    padding-bottom: 18px;
}
table {
    width: 100%;
    table-layout: fixed;
    border-collapse: separate;
    border-spacing: 0;
    line-height: 15px;
}
.c-head {
    width: 20px;
}
.c-item {
    width: 100px;
}
.c-text {
    width: 303px;
}
.c-file {
    width: 150px;
}
.c-p {
    width: 25px;
}
th, td {
    padding: 1px 3px;
    font-weight: normal;
    white-space: nowrap;
}
thead th {
    height: 24px;
    padding: 0;
    color: #000;
    background: linear-gradient(#f8fafd, #d6e0ee);
    border-right: 1px solid #9cb8d8;
    border-bottom: 1px solid #9cb8d8;
}
thead .corner {
    background: linear-gradient(135deg, #a4c0e4 50%, #f0f6fc 50%);
    border: 3px solid #a8c4e8;
}
tbody th {
    background: #e4ecf7;
    border-right: 1px solid #9cb8d8;
    border-bottom: 1px solid #9cb8d8;
}
td {
    border-right: 1px solid #c01818;
    border-bottom: 1px solid #c01818;
}
td span {
    font: 13px/0 "Liberation Mono", monospace;
    white-space: pre;
}
.lat {
    font-family: "Liberation Serif", serif;
}
td a {
    color: #0a0a9c;
}
.chk {
    padding: 0 4px;
}
.chk input {
    appearance: none;
    display: block;
    width: 13px;
    height: 13px;
    margin: 0 auto;
    border: 1px solid;
    border-color: #606060 #d4d0c8 #d4d0c8 #606060;
    box-shadow: inset 1px 1px #909090;
}
.chk input:checked::before {
    margin: 1px 0 0 4px;
    border-color: #000;
}
.vscroll {
    width: 18px;
    display: flex;
    flex-direction: column;
    align-items: center;
    gap: 6px;
    padding: 5px 0;
    background: linear-gradient(90deg, #7d9cc8, #a8c4e8);
}
.vthumb {
    flex: 1;
    width: 15px;
    margin-top: 102px;
    display: flex;
    align-items: center;
    justify-content: center;
    border: 1px solid #7c98c4;
    background: linear-gradient(90deg, #e4ecf8, #b4c8e4);
}
.vthumb i {
    width: 9px;
    height: 7px;
    background: repeating-linear-gradient(#8c9cb4 0 1px, transparent 1px 2px);
}
.dlg-status {
    height: 29px;
    display: flex;
    align-items: center;
    gap: 2px;
    padding: 1px 2px 0 5px;
    border-top: 5px solid #d4d0c8;
    background: #a6c8ee;
}
.dlg-status span {
    height: 18px;
    border: 1px solid;
    border-color: #505050 #fff #fff #505050;
    text-align: center;
}
.dlg-status .site {
    width: 42px;
    background: #f4c8bc;
    color: #145014;
    font-size: 16px;
    font-weight: 500;
    line-height: 16px;
}
.dlg-status .mode {
    width: 22px;
    background: #c4bcf4;
    color: #e01030;
    font: bold 16px/16px "Liberation Serif", serif;
}
.dlg-status svg {
    margin: 8px 0 0 auto;
}

/* overlays */
.badge {
    position: absolute;
    left: 1088px;
    top: -29px;
    width: 48px;
    height: 48px;
    padding-top: 28px;
    border: 2px solid #d0f0d0;
    border-radius: 50%;
    background: #3cb84c;
    box-shadow: 0 2px 6px rgba(0, 0, 0, 0.5);
    color: #fff;
    font: bold 11px/12px "DejaVu Sans", sans-serif;
    text-align: center;
}
.frame {
    position: absolute;
    left: 696px;
    top: 577px;
    width: 492px;
    height: 99px;
    border: 2px solid #1ee61e;
    box-shadow: 2px 3px 5px rgba(0, 0, 0, 0.5), inset 2px 3px 5px rgba(0, 0, 0, 0.4);
}
.arrow {
    position: absolute;
    left: 677px;
    top: 692px;
}
```
